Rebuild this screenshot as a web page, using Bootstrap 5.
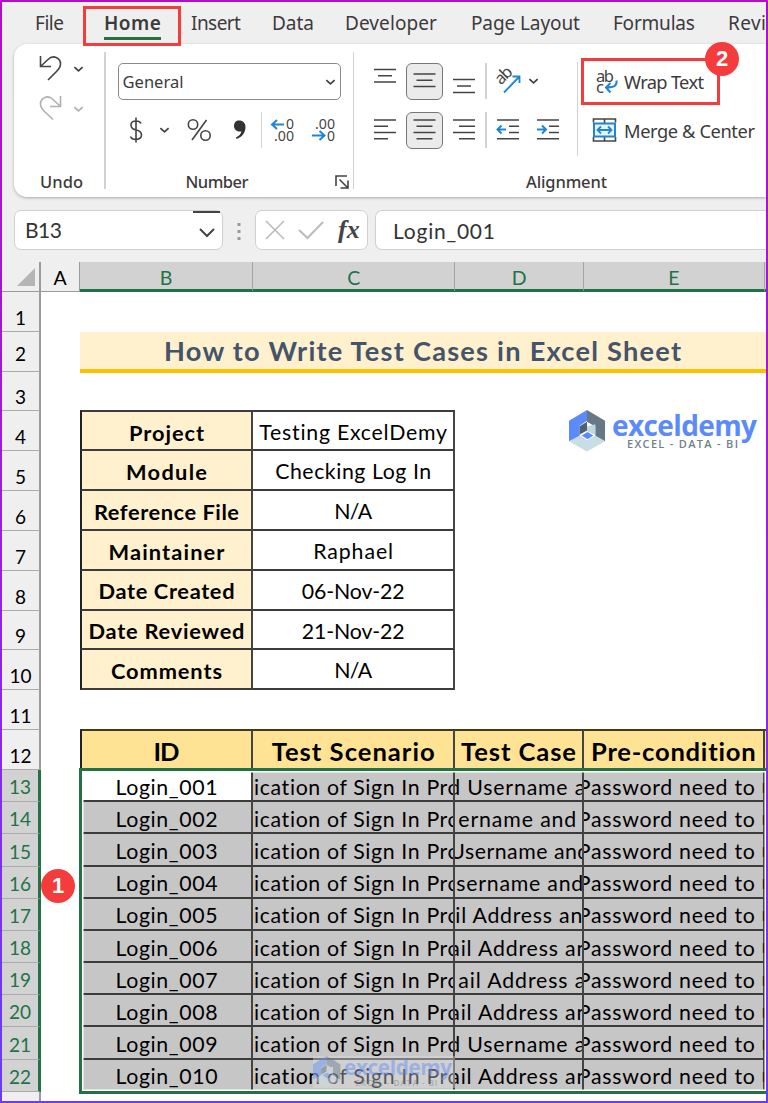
<!DOCTYPE html>
<html lang="en">
<head>
<meta charset="utf-8">
<title>Test cases</title>
<link href="https://cdn.jsdelivr.net/npm/bootstrap@5.3.0/dist/css/bootstrap.min.css" rel="stylesheet">
<style>
:root{--green:#217346;--ink:#3b3b3b;--red:#f43c3c}
body{margin:0;background:#efefef;overflow:hidden}
.frame{width:768px;height:1103px;border:2px solid;border-image:linear-gradient(#b40cc8,#9a1fe0 50%,#6a3cf5) 1;overflow:hidden;background:#efefef}
.ui{font-family:"Noto Sans","Open Sans",sans-serif;color:var(--ink)}
.calc{font-family:Lato,"Liberation Sans",sans-serif;color:#000}
svg{display:block;flex:none;fill:none;stroke:#444;stroke-width:1.6;overflow:visible}
svg text{stroke:none;fill:#444}
.blue{stroke:#1f86d2}
.t{white-space:pre;display:inline-block}
/* tabs */
.tabs{height:42px;font-size:19px;line-height:42px}
.tabs>div{flex:none}
.home{font-weight:600;position:relative}
.home:after{content:"";position:absolute;left:0;right:0;top:34.5px;height:3px;background:var(--green)}
.mark-box{position:absolute;border:3px solid var(--red);z-index:3}
.pin{position:absolute;width:34px;height:34px;border-radius:50%;background:var(--red);color:#fff;font:700 22px/34px "Liberation Sans",sans-serif;text-align:center;z-index:4}
/* ribbon */
.ribbon{margin-left:12px;height:153px;background:#fff;border-radius:13px 0 0 13px;box-shadow:0 1px 3px #aaa}
.sep{width:1.5px;background:#d2d2d2;flex:none}
.tool{height:36px}
.group-name{height:24px;font-size:16.5px;line-height:20px;font-weight:500}
.numfmt{width:223.5px;height:37px;border:1.5px solid #8a8a8a;border-radius:5px;font-size:16.5px;padding:0 4px;line-height:32px}
.pressed{width:37px;height:37px;border:1.5px solid #777;border-radius:6px;background:#ebebeb}
/* formula bar */
.fbar{height:40px;margin:13px 0 0 12px}
.fbox{height:40px;background:#fff;border:1.5px solid #d0d0d0;border-radius:7px}
.fbox .calc{font-size:21px;color:#333;line-height:40px}
.namebox{position:relative;width:209px}
.namebox:before{content:"";position:absolute;right:2px;top:0;width:27px;height:2px;background:#444}
/* sheet */
.colhead{height:30px;margin-top:12px;font-size:19.5px;line-height:31px}
.colhead>div{flex:none;text-align:center}
.hsel{background:#d2d2d2;color:var(--green);border-bottom:3px solid var(--green);border-right:1px solid #a5a5a5}
.rh{width:39px;flex:none;background:#efefef;border-right:2px solid #9b9b9b;border-bottom:1.5px solid #ababab;font-size:19px;text-align:center;display:flex;align-items:flex-end;justify-content:center;line-height:27px}
.rh.raised{line-height:34px}
.ca{width:39px;flex:none}
.line{display:flex;height:39.83px;background:#fff}
.line.sel{height:32.2px}
.sel .rh{background:#d2d2d2;color:var(--green);border-right:3px solid var(--green);line-height:28px}
.cell{flex:none;overflow:hidden;display:flex;align-items:center;justify-content:center;border-right:2px solid #444;border-bottom:2px solid #3c3c3c;white-space:pre;font-size:21.3px;padding-top:4px}
.wb{width:173px}.wc{width:202.3px}.wd{width:128.5px}.we{width:181px}.wf{width:4px}
.k{background:#fff0ce;border-left:2px solid #222;font-weight:700;font-size:21.8px}
.topline .cell{margin-top:-1px;border-top:2px solid #3c3c3c}
.hd .cell{background:#ffe395;font-weight:700;font-size:25.6px;border-top:2px solid #443818;border-bottom:0;margin-top:-1px;padding-top:2px}
.hd .wb{border-left:2px solid #222}
.sel .cell{background:#c6c6c6;justify-content:flex-start;padding-top:5px}
.sel .wb{justify-content:center;padding-left:2px}
.sel .cell.active{background:#fff}
.sel .cell.wf{overflow:visible;font-size:13.5px;border-right:0;color:#222;line-height:14px}
.wf b{position:relative;margin-left:-3px}
.banner{width:688px;background:#fff0ce;border-bottom:4px solid #ffc000;font-size:27.2px;font-weight:700;color:#44546a;padding:0 0 0 84px;line-height:37px;height:41px}
.selection{position:absolute;left:79px;top:768px;width:687px;height:326px;border:3px solid var(--green);border-right:0;box-shadow:inset 0 0 0 1.5px #fff;z-index:2}
.logo{position:absolute;left:569px;top:410px;font-family:"Open Sans","Noto Sans",sans-serif}
.word{font-weight:700;font-size:28px;line-height:30px;color:#5b8bfb}
.tag{font-weight:600;font-size:11px;line-height:11px;color:#6f7f8b;padding-left:15px}
.watermark{left:313px;top:1056px;width:142px;height:32px;background:rgba(225,225,225,.38);z-index:2;overflow:hidden}
.watermark .inner{transform:scale(.74);transform-origin:0 0;opacity:.45;width:200px}
</style>
</head>
<body>
<svg width="0" height="0" class="position-absolute">
 <symbol id="chev" viewBox="0 0 12 8"><path d="M1.500 2 6 6l4.500-4" stroke-width="2"/></symbol>
 <symbol id="hex" viewBox="0 0 38 43"><g stroke="none"><path fill="#5b8bfb" d="M18.500 0V11L11 16v12L0 32V11z"/><path fill="#667886" d="M18.500 0 37 11v21l-10-5V17l-8.500-5z"/><path fill="#c9dde4" d="M0 32l11-6 7.500 5L27 26l10 6-18.500 10.500z"/><path fill="#4f6072" d="M18.500 12 11 16.500v8.500l7.500-4z"/><path fill="#bfd7e0" d="M18.500 17 27 14.500v11l-8.500-4z"/><path fill="#5b8bfb" d="M19 22.500 25 26l-6 4-6-4z"/></g></symbol>
</svg>
<div class="frame">
 <div class="tabs ui d-flex">
  <div style="margin-left:33px"><span class="t" data-w="29">File</span></div>
  <div class="home" style="margin-left:40px"><span class="t" data-w="57">Home</span></div>
  <div style="margin-left:30px"><span class="t" data-w="50">Insert</span></div>
  <div style="margin-left:31px"><span class="t" data-w="42">Data</span></div>
  <div style="margin-left:31px"><span class="t" data-w="92">Developer</span></div>
  <div style="margin-left:34px"><span class="t" data-w="109">Page Layout</span></div>
  <div style="margin-left:33px"><span class="t" data-w="82">Formulas</span></div>
  <div style="margin-left:33px"><span class="t" data-w="64">Review</span></div>
 </div>
 <div class="ribbon ui d-flex">
  <div style="width:90px" class="d-flex flex-column flex-shrink-0">
   <div class="d-flex align-items-center" style="margin:11px 0 0 24px">
    <svg width="26" height="28" viewBox="0 0 26 28"><path d="M2.500 1v10.500H13M3 11 10 4.500C15 -.5 22.500 2.500 22.500 9c0 3-1.500 5-4 7.500l-8.500 8.500"/></svg>
    <svg width="11" height="8" style="margin-left:9px"><use href="#chev"/></svg>
   </div>
   <div class="d-flex align-items-center" style="margin:12px 0 0 24px;opacity:.42">
    <svg width="26" height="28" viewBox="0 0 26 28"><path d="M22.500 1v10.500H12M22 11 15 4.500C10 -.5 2.500 2.500 2.500 9c0 3 1.500 5 4 7.500l8.500 8"/></svg>
    <svg width="11" height="8" style="margin-left:9px"><use href="#chev"/></svg>
   </div>
   <div class="group-name" style="margin:49px 0 0 26px"><span class="t" data-w="43">Undo</span></div>
  </div>
  <div class="sep my-2"></div>
  <div style="width:247px" class="flex-shrink-0">
   <div class="d-flex align-items-center justify-content-between numfmt" style="margin:19px 0 0 12px"><span class="t" data-w="61">General</span><svg width="11" height="8"><use href="#chev"/></svg></div>
   <div class="tool d-flex align-items-center" style="margin:12px 0 0 20px">
    <svg width="20" height="30" viewBox="0 0 20 30"><path d="M15 8.500Q14 6 10 6 5 6 5 10t5 5q5.500 1 5.500 5T10 24.500Q5.500 24.500 4.500 21.500M10 2.500v25"/></svg>
    <svg width="11" height="8" style="margin-left:13px"><use href="#chev"/></svg>
    <svg width="26" height="26" style="margin-left:16px" viewBox="0 0 26 26"><circle cx="7" cy="7.500" r="4.700"/><circle cx="19.500" cy="18.500" r="4.700"/><path d="M20.500 3 6 23"/></svg>
    <svg width="16" height="24" style="margin-left:20px" viewBox="0 0 16 24"><path d="M7 2.500c4 0 6.500 2.500 6.500 6.500 0 6-4 10.500-9 12l-.6-1.500c3-1.500 5-3.500 5.500-6C5 14 2 11.500 2 8s2-5.500 5-5.500z" fill="#333" stroke="none"/></svg>
    <div class="sep" style="height:36px;margin-left:13px"></div>
    <svg width="26" height="28" style="margin-left:8px" viewBox="0 0 26 28"><path class="blue" stroke-width="2" d="M2 8.500h12M7 4 2 8.500 7 13"/><text x="16" y="12.500" font-size="14.500" textLength="8" lengthAdjust="spacingAndGlyphs">0</text><text x="4" y="24.500" font-size="14.500" textLength="20" lengthAdjust="spacingAndGlyphs">.00</text></svg>
    <svg width="26" height="28" style="margin-left:15px" viewBox="0 0 26 28"><path class="blue" stroke-width="2" d="M1 19.500h12M8.500 15l5 4.500-5 4.500"/><text x="16" y="24.500" font-size="14.500" textLength="8" lengthAdjust="spacingAndGlyphs">0</text><text x="4" y="12.500" font-size="14.500" textLength="20" lengthAdjust="spacingAndGlyphs">.00</text></svg>
   </div>
   <div class="group-name d-flex" style="margin:24px 0 0 80px"><span class="t" data-w="63">Number</span>
    <svg width="14" height="14" style="margin:3px 0 0 87px" viewBox="0 0 14 14"><path d="M1 11V1h11M4.500 4.500l8 8M13 5.500V13H5.500"/></svg></div>
  </div>
  <div class="sep my-2"></div>
  <div style="width:222.500px" class="flex-shrink-0">
   <div class="tool d-flex align-items-center" style="margin:19px 0 0 18.500px">
    <svg width="24" height="36" viewBox="0 0 24 36"><path d="M1 6.500h22M5 12.700h14M1 19h22"/></svg>
    <div class="pressed flex-shrink-0" style="margin-left:9px"><svg width="34" height="34" viewBox="0 0 34 34"><path d="M6.500 10h22M9.500 16.300h16M6.500 22.500h22"/></svg></div>
    <svg width="24" height="36" style="margin-left:9.500px" viewBox="0 0 24 36"><path d="M1 16.500h22M5 23h14M1 29.500h22"/></svg>
    <div class="sep" style="height:36px;margin-left:9px"></div>
    <svg width="28" height="30" style="margin-left:8px" viewBox="0 0 28 30"><text transform="translate(6 19.500) rotate(-45)" font-size="16.500" textLength="18">ab</text><path class="blue" stroke-width="1.800" d="M9 26.500 24 11M17.500 10.500H24.500V17"/></svg>
    <svg width="11" height="8" style="margin-left:5px"><use href="#chev"/></svg>
   </div>
   <div class="tool d-flex align-items-center" style="margin:13px 0 0 18.500px">
    <svg width="24" height="36" viewBox="0 0 24 36"><path d="M1 8h22M1 14.300h14M1 20.500h22M1 26.700h14"/></svg>
    <div class="pressed flex-shrink-0" style="margin-left:9px"><svg width="34" height="34" viewBox="0 0 34 34"><path d="M6.500 7h22M9.500 13.300h16M6.500 19.500h22M9.500 25.700h16"/></svg></div>
    <svg width="24" height="36" style="margin-left:9.500px" viewBox="0 0 24 36"><path d="M1 8h22M7 14.300h16M1 20.500h22M7 26.700h16"/></svg>
    <div class="sep" style="height:36px;margin-left:9px"></div>
    <svg width="24" height="36" style="margin-left:9px" viewBox="0 0 24 36"><path d="M1 8h22M13 14.300h10M13 20.500h10M1 26.700h22"/><path class="blue" stroke-width="2" d="M1.500 17.500H10M5.500 13.500l-4 4 4 4"/></svg>
    <svg width="24" height="36" style="margin-left:16px" viewBox="0 0 24 36"><path d="M1 8h22M13 14.300h10M13 20.500h10M1 26.700h22"/><path class="blue" stroke-width="2" d="M1 17.500h9M6 13.500l4 4-4 4"/></svg>
   </div>
   <div class="group-name" style="margin:24px 0 0 172px"><span class="t" data-w="81">Alignment</span></div>
  </div>
  <div class="sep" style="margin:18px 0 41px"></div>
  <div class="flex-shrink-0" style="font-size:18.300px">
   <div class="tool d-flex align-items-center" style="margin:20px 0 0 15px">
    <svg width="27" height="30" style="margin-left:3px" viewBox="0 0 27 30"><text x="0" y="14.500" font-size="16.500" textLength="18">ab</text><text x="0" y="25.500" font-size="16.500">c</text><path class="blue" stroke-width="2" d="M20.500 13.500c.8 5-2 7-10.500 7M14.500 16 10 20.500l4.500 5"/></svg>
    <span class="t" style="margin-left:1px" data-w="80">Wrap Text</span>
   </div>
   <div class="tool d-flex align-items-center" style="margin:12px 0 0 14px">
    <svg width="25" height="24" viewBox="0 0 25 24"><path d="M1.500 4.500V1h22v3.500M12.500 1v4M1.500 19v4h22v-4M12.500 19v4"/><path class="blue" stroke-width="2" fill="#e8f4fc" d="M2 5.500h21v13H2z"/><path class="blue" stroke-width="1.800" d="M5.500 12h14M9 8.500 5.500 12 9 15.500M16 8.500l3.500 3.500-3.500 3.500"/></svg>
    <span class="t" style="margin:2px 0 0 7px" data-w="131">Merge &amp; Center</span>
   </div>
  </div>
 </div>

 <div class="fbar d-flex">
  <div class="fbox namebox flex-shrink-0 d-flex align-items-center justify-content-between" style="padding:0 6px 0 10px"><span class="t calc" data-w="37">B13</span><svg width="18" height="12" style="margin-top:6px" viewBox="0 0 18 12"><path d="M2 2l7 7 7-7" stroke-width="2"/></svg></div>
  <svg width="6" height="20" style="margin:12px 0 0 13px" viewBox="0 0 6 20"><path stroke="#999" stroke-width="3" stroke-dasharray="3 4" d="M3 1v18"/></svg>
  <div class="fbox ui d-flex align-items-center flex-shrink-0" style="width:113px;margin-left:13px;padding-left:7px">
   <svg width="24" height="24" viewBox="0 0 24 24"><path stroke="#bbb" d="M3 3l18 18M21 3 3 21"/></svg>
   <svg width="28" height="24" style="margin-left:10px" viewBox="0 0 28 24"><path stroke="#bbb" stroke-width="2" d="M2 12l8.500 8L26 4"/></svg>
   <span style="font:italic 700 26px/30px 'Liberation Serif',serif;margin-left:13px;color:#444">fx</span>
  </div>
  <div class="fbox flex-grow-1 border-end-0 rounded-end-0" style="margin-left:7px;padding-left:17px"><span class="t calc" data-w="102">Login_001</span></div>
 </div>

 <div class="calc">
  <div class="colhead d-flex">
   <div style="width:39px;border-right:2px solid #9b9b9b;border-bottom:1.500px solid #9b9b9b"><svg width="37" height="28"><path d="M33 6v18H15z" fill="#b5b5b5" stroke="none"/></svg></div>
   <div style="width:39px;border-bottom:1.500px solid #9b9b9b;border-right:1px solid #9b9b9b">A</div>
   <div class="hsel wb">B</div><div class="hsel wc">C</div><div class="hsel wd">D</div><div class="hsel we">E</div><div class="hsel wf"></div>
  </div>
  <div class="line"><div class="rh">1</div></div>
  <div class="line"><div class="rh raised">2</div><div class="ca"></div><div class="banner"><span class="t" data-w="517">How to Write Test Cases in Excel Sheet</span></div></div>
  <div class="line"><div class="rh">3</div></div>
  <div class="line topline"><div class="rh">4</div><div class="ca"></div><div class="cell wb k"><span class="t" data-w="75">Project</span></div><div class="cell wc"><span class="t" data-w="188">Testing ExcelDemy</span></div></div>
  <div class="line"><div class="rh">5</div><div class="ca"></div><div class="cell wb k"><span class="t" data-w="81">Module</span></div><div class="cell wc"><span class="t" data-w="156">Checking Log In</span></div></div>
  <div class="line"><div class="rh">6</div><div class="ca"></div><div class="cell wb k"><span class="t" data-w="145">Reference File</span></div><div class="cell wc"><span class="t" data-w="38">N/A</span></div></div>
  <div class="line"><div class="rh">7</div><div class="ca"></div><div class="cell wb k"><span class="t" data-w="116">Maintainer</span></div><div class="cell wc"><span class="t" data-w="80">Raphael</span></div></div>
  <div class="line"><div class="rh">8</div><div class="ca"></div><div class="cell wb k"><span class="t" data-w="136">Date Created</span></div><div class="cell wc"><span class="t" data-w="103">06-Nov-22</span></div></div>
  <div class="line"><div class="rh">9</div><div class="ca"></div><div class="cell wb k"><span class="t" data-w="156">Date Reviewed</span></div><div class="cell wc"><span class="t" data-w="103">21-Nov-22</span></div></div>
  <div class="line"><div class="rh">10</div><div class="ca"></div><div class="cell wb k"><span class="t" data-w="111">Comments</span></div><div class="cell wc"><span class="t" data-w="38">N/A</span></div></div>
  <div class="line"><div class="rh">11</div></div>
  <div class="line hd"><div class="rh">12</div><div class="ca"></div><div class="cell wb"><span class="t" data-w="26">ID</span></div><div class="cell wc"><span class="t" data-w="163">Test Scenario</span></div><div class="cell wd"><span class="t" data-w="115">Test Case</span></div><div class="cell we"><span class="t" data-w="165">Pre-condition</span></div><div class="cell wf"></div></div>
  <div id="cases"></div>
  <div class="line"><div class="rh"></div></div>
 </div>
</div>

<div class="mark-box" style="left:83px;top:6px;width:98px;height:40px"></div>
<div class="mark-box" style="left:581px;top:58px;width:139px;height:47px"></div>
<div class="pin" style="left:705px;top:42px">2</div>
<div class="pin" style="left:41px;top:869px">1</div>
<div class="selection"></div>
<div class="logo d-flex"><svg width="37" height="42"><use href="#hex"/></svg><div style="margin-left:6px"><div class="word"><span class="t" data-w="145">exceldemy</span></div><div class="tag" style="margin-top:-2px"><span class="t" data-w="111">EXCEL - DATA - BI</span></div></div></div>
<div class="watermark position-absolute"><div class="inner d-flex" style="font-family:'Open Sans',sans-serif"><svg width="38" height="43"><use href="#hex"/></svg><div style="margin-left:4px"><div class="word"><span class="t" data-w="146">exceldemy</span></div><div class="tag"><span class="t" data-w="111">EXCEL - DATA - BI</span></div></div></div></div>

<script>
// Column D entries: visible text, offset from the cell's left edge, width
const steps=[["d Username a",-7,137],["ername and",3,118],["Username and",-6,140],["sername and",1,127],["il Address an",0,127],["ail Address an",-6,139],["ail Address a",3,127],["ail Address an",-6,139],["d Username a",-7,137],["ail Address an",-6,139]];
document.getElementById("cases").innerHTML=steps.map(([s,x,w],i)=>`<div class="line sel"><div class="rh">${i+13}</div><div class="ca"></div>
<div class="cell wb${i?"":" active"}"><span class="t" data-w="102">Login_0${String(i+1).padStart(2,"0")}</span></div>
<div class="cell wc"><span class="t" style="margin-left:1px" data-w="206">ication of Sign In Pro</span></div>
<div class="cell wd"><span class="t" style="margin-left:${x}px" data-w="${w}">${s}</span></div>
<div class="cell we"><span class="t" style="margin-left:-6px" data-w="177">Password need to</span></div>
<div class="cell wf"><b>E</b></div></div>`).join("");
document.querySelectorAll("[data-w]").forEach(e=>{
  const k=e.closest(".inner")?0.74:1;
  const n=e.textContent.length,now=e.getBoundingClientRect().width/k,gap=(e.dataset.w-now)/(n-1);
  e.style.letterSpacing=gap+"px";e.style.marginRight=-gap+"px";
});
</script>
<script src="https://cdn.jsdelivr.net/npm/bootstrap@5.3.0/dist/js/bootstrap.bundle.min.js"></script>
</body>
</html>
